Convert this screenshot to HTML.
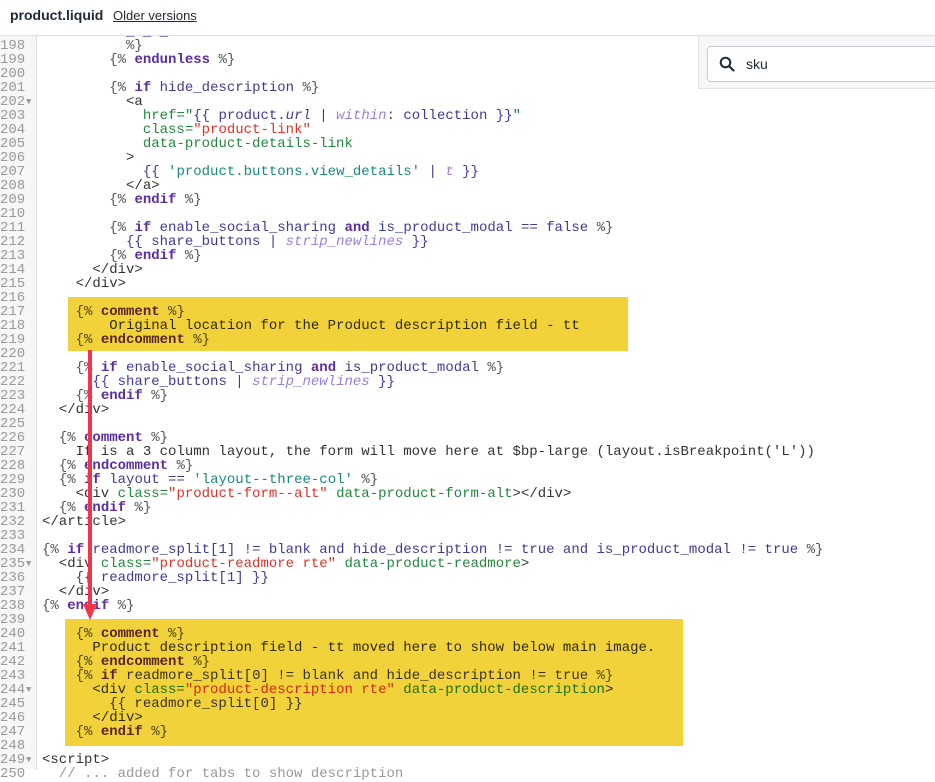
<!DOCTYPE html>
<html><head><meta charset="utf-8"><style>
body{margin:0;width:935px;height:770px;overflow:hidden;background:#fff;position:relative;font-family:"Liberation Sans",sans-serif}
.hdr{position:absolute;left:0;top:0;width:935px;height:35px;border-bottom:1px solid #dfe3e8;background:#fff;z-index:5}
.hdr b{position:absolute;left:10px;top:7px;font-size:14px;color:#212b36}
.hdr a{position:absolute;left:113px;top:8px;font-size:13px;color:#212b36;text-decoration:underline}
.gut{position:absolute;left:0;top:36px;width:36px;height:734px;background:#f7f7f7;border-right:1px solid #ddd}
pre{margin:0;font-family:"Liberation Mono",monospace;font-size:14px;line-height:14px;position:absolute;top:25px}
.nums{left:0;width:23px;text-align:right;color:#999}
.fold{left:26px;color:#999;font-size:9px}
.code{left:42px;color:#333}
.k{color:#5b2d9e;font-weight:bold}.v{color:#3f3b96}.s{color:#e0322a}.a{color:#23873d}.f{color:#9a7fd8;font-style:italic}.q{color:#1a8a7a}.d{color:#555}.c{color:#999}
.y{position:absolute;background:#f2d23a;mix-blend-mode:multiply;z-index:2}
.srch{position:absolute;left:698px;top:36px;width:237px;height:52px;background:#f6f6f7;border-left:1px solid #e1e3e5;border-bottom:1px solid #e1e3e5;z-index:3}
.inp{position:absolute;left:8px;top:10px;width:240px;height:34px;background:#fff;border:1px solid #c4cdd5;border-radius:4px}
.inp span{position:absolute;left:38px;top:9px;font-size:14px;color:#212b36}
</style></head><body>
<div class="gut"></div>
<pre class="nums">197
198
199
200
201
202
203
204
205
206
207
208
209
210
211
212
213
214
215
216
217
218
219
220
221
222
223
224
225
226
227
228
229
230
231
232
233
234
235
236
237
238
239
240
241
242
243
244
245
246
247
248
249
250</pre>
<pre class="fold" style="line-height:14px;font-size:9px">





▼
































▼








▼




▼</pre>
<pre class="code">          <span class="v">_ _ _</span>
          <span class="d">%}</span>
        <span class="d">{%</span> <span class="k">endunless</span> <span class="d">%}</span>

        <span class="d">{%</span> <span class="k">if</span> <span class="v">hide_description</span> <span class="d">%}</span>
          &lt;a
            <span class="a">href="</span><span class="v">{{ product.<i>url</i> |</span> <span class="f">within</span><span class="v">: collection }}</span><span class="a">"</span>
            <span class="a">class=</span><span class="s">"product-link"</span>
            <span class="a">data-product-details-link</span>
          &gt;
            <span class="v">{{</span> <span class="q">'product.buttons.view_details'</span> <span class="v">|</span> <span class="f">t</span> <span class="v">}}</span>
          &lt;/a&gt;
        <span class="d">{%</span> <span class="k">endif</span> <span class="d">%}</span>

        <span class="d">{%</span> <span class="k">if</span> <span class="v">enable_social_sharing</span> <span class="k">and</span> <span class="v">is_product_modal == false</span> <span class="d">%}</span>
          <span class="v">{{ share_buttons |</span> <span class="f">strip_newlines</span> <span class="v">}}</span>
        <span class="d">{%</span> <span class="k">endif</span> <span class="d">%}</span>
      &lt;/div&gt;
    &lt;/div&gt;

    <span class="d">{%</span> <span class="k">comment</span> <span class="d">%}</span>
        Original location for the Product description field - tt
    <span class="d">{%</span> <span class="k">endcomment</span> <span class="d">%}</span>

    <span class="d">{%</span> <span class="k">if</span> <span class="v">enable_social_sharing</span> <span class="k">and</span> <span class="v">is_product_modal</span> <span class="d">%}</span>
      <span class="v">{{ share_buttons |</span> <span class="f">strip_newlines</span> <span class="v">}}</span>
    <span class="d">{%</span> <span class="k">endif</span> <span class="d">%}</span>
  &lt;/div&gt;

  <span class="d">{%</span> <span class="k">comment</span> <span class="d">%}</span>
    If is a 3 column layout, the form will move here at $bp-large (layout.isBreakpoint('L'))
  <span class="d">{%</span> <span class="k">endcomment</span> <span class="d">%}</span>
  <span class="d">{%</span> <span class="k">if</span> <span class="v">layout ==</span> <span class="q">'layout--three-col'</span> <span class="d">%}</span>
    &lt;div <span class="a">class=</span><span class="s">"product-form--alt"</span> <span class="a">data-product-form-alt</span>&gt;&lt;/div&gt;
  <span class="d">{%</span> <span class="k">endif</span> <span class="d">%}</span>
&lt;/article&gt;

<span class="d">{%</span> <span class="k">if</span> <span class="v">readmore_split[1] != blank and hide_description != true and is_product_modal != true</span> <span class="d">%}</span>
  &lt;div <span class="a">class=</span><span class="s">"product-readmore rte"</span> <span class="a">data-product-readmore</span>&gt;
    <span class="v">{{ readmore_split[1] }}</span>
  &lt;/div&gt;
<span class="d">{%</span> <span class="k">endif</span> <span class="d">%}</span>

    <span class="d">{%</span> <span class="k">comment</span> <span class="d">%}</span>
      Product description field - tt moved here to show below main image.
    <span class="d">{%</span> <span class="k">endcomment</span> <span class="d">%}</span>
    <span class="d">{%</span> <span class="k">if</span> <span class="v">readmore_split[0] != blank and hide_description != true</span> <span class="d">%}</span>
      &lt;div <span class="a">class=</span><span class="s">"product-description rte"</span> <span class="a">data-product-description</span>&gt;
        <span class="v">{{ readmore_split[0] }}</span>
      &lt;/div&gt;
    <span class="d">{%</span> <span class="k">endif</span> <span class="d">%}</span>

&lt;script&gt;
  <span class="c">// ... added for tabs to show description</span></pre>
<div class="y" style="left:68px;top:297px;width:560px;height:54px"></div>
<div class="y" style="left:65px;top:619px;width:618px;height:127px"></div>
<div style="position:absolute;left:88px;top:350px;width:4px;height:258px;background:#f0364a;z-index:4"></div>
<div style="position:absolute;left:83px;top:604px;width:0;height:0;border-left:7px solid transparent;border-right:7px solid transparent;border-top:16px solid #f0364a;z-index:4"></div>
<div class="hdr"><b>product.liquid</b><a>Older versions</a></div>
<div class="srch"><div class="inp">
<svg style="position:absolute;left:11px;top:9px" width="16" height="16" viewBox="0 0 16 16"><circle cx="6.5" cy="6.5" r="4.8" fill="none" stroke="#212b36" stroke-width="2"/><path d="M10 10l4.5 4.5" stroke="#212b36" stroke-width="2.2" stroke-linecap="round"/></svg>
<span>sku</span></div></div>
</body></html>
